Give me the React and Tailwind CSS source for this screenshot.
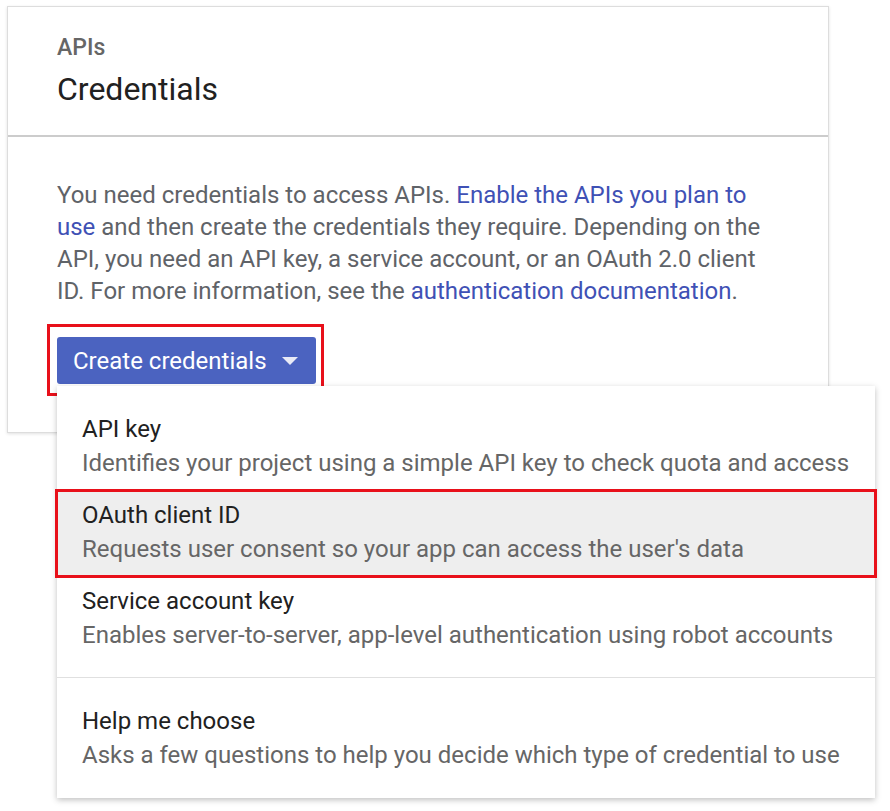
import React from "react";

const items = [
  {
    title: "API key",
    desc: "Identifies your project using a simple API key to check quota and access",
  },
  {
    title: "OAuth client ID",
    desc: "Requests user consent so your app can access the user's data",
    marked: true,
  },
  {
    title: "Service account key",
    desc: "Enables server-to-server, app-level authentication using robot accounts",
  },
];

const MenuRow = ({ title, desc, marked }) => (
  <div className={`relative px-[25px] pt-[8px] pb-[10px] ${marked ? "bg-[#eeeeee]" : ""}`}>
    <div className="text-[24px] leading-[34px] text-[#212121]">{title}</div>
    <div className="text-[24px] leading-[34px] text-[#666666]">{desc}</div>
    {marked && (
      <span className="pointer-events-none absolute -left-[2px] -right-[2px] -top-[1px] -bottom-[2px] border-[3px] border-[#e8101a]" />
    )}
  </div>
);

export default function App() {
  return (
    <div
      className="relative min-h-[811px] w-[890px] bg-white pl-[7px] pt-[6px]"
      style={{ fontFamily: "Roboto, 'Noto Sans', sans-serif" }}
    >
      {/* carte principale */}
      <div className="w-[822px] border border-[#dddddd] bg-white shadow-[0_1px_3px_rgba(0,0,0,0.12)]">
        <div className="border-b-2 border-[#cccccc] px-[49px] pt-[27px] pb-[26px]">
          <div className="text-[23px] leading-[28px] font-medium text-[#666666]">APIs</div>
          <div className="mt-[7px] text-[32px] leading-[40px] text-[#212121]">Credentials</div>
        </div>

        <div className="px-[49px] pt-[42px] pb-[48px]">
          <p className="text-[24px] leading-[32px] text-[#5f6368]">
            You need credentials to access APIs.{" "}
            <span className="text-[#3f51b5]">Enable the APIs you plan to use</span> and then
            create the credentials they require. Depending on the API, you need an API key, a
            service account, or an OAuth 2.0 client ID. For more information, see the{" "}
            <span className="text-[#3f51b5]">authentication documentation</span>.
          </p>

          <div className="relative mt-[30px] inline-block">
            <button className="flex h-[47px] w-[259px] items-center rounded-[3px] bg-[#4b63c0] pl-[16px] text-[24px] text-white">
              Create credentials
              <svg width="16" height="8" viewBox="0 0 16 8" className="ml-[15px]">
                <path d="M0 0 L16 0 L8 8 Z" fill="#e8eaf6" />
              </svg>
            </button>
            <span className="pointer-events-none absolute -left-[10px] -right-[8px] -top-[13px] -bottom-[12px] border-[3px] border-[#e8101a]" />
          </div>
        </div>
      </div>

      {/* menu déroulant */}
      <div className="absolute left-[57px] top-[386px] w-[818px] bg-white pt-[18px] pb-[16px] shadow-[0_2px_6px_rgba(0,0,0,0.25)]">
        {items.map((it) => (
          <MenuRow key={it.title} {...it} />
        ))}
        <div className="mt-[15px] mb-[18px] h-px bg-[#e0e0e0]" />
        <MenuRow
          title="Help me choose"
          desc="Asks a few questions to help you decide which type of credential to use"
        />
      </div>
    </div>
  );
}
